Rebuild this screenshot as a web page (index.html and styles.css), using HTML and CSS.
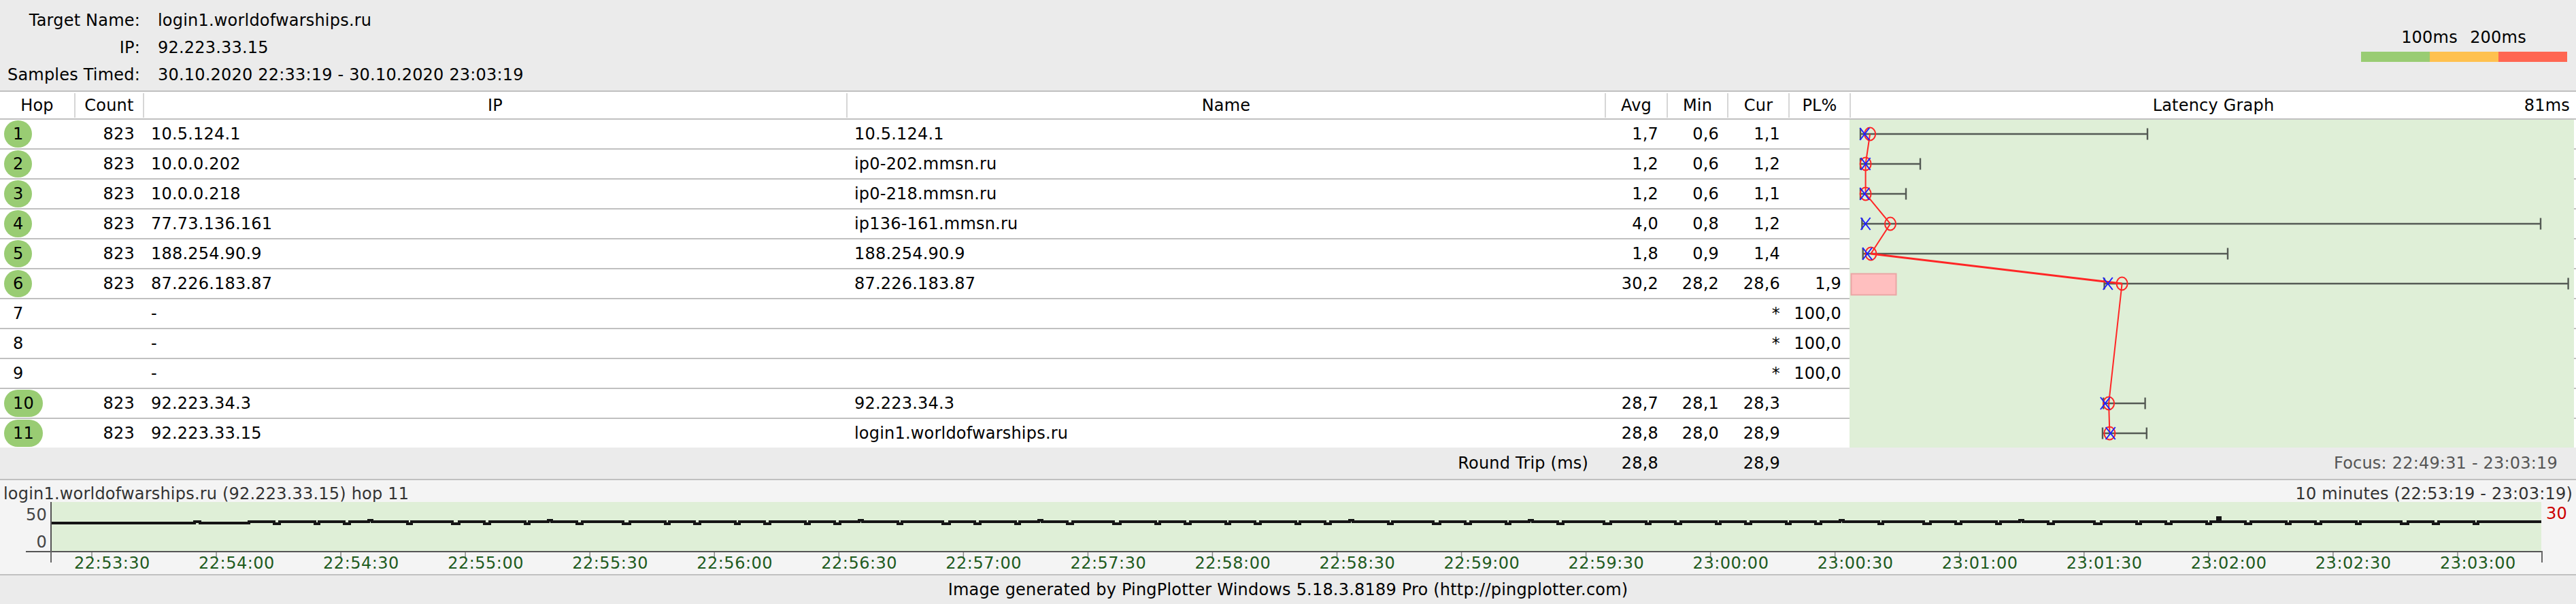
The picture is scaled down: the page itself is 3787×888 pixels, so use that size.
FILE: index.html
```html
<!DOCTYPE html>
<html>
<head>
<meta charset="utf-8">
<title>PingPlotter</title>
<link rel="stylesheet" href="styles.css">
</head>
<body>
<header class="top">
  <div class="info">
    <span class="lbl">Target Name:</span><span>login1.worldofwarships.ru</span>
    <span class="lbl">IP:</span><span>92.223.33.15</span>
    <span class="lbl">Samples Timed:</span><span>30.10.2020 22:33:19 - 30.10.2020 23:03:19</span>
  </div>
  <div class="legend">
    <div class="legend-labels"><span>100ms</span><span>200ms</span></div>
    <div class="legend-bar"><i class="g"></i><i class="o"></i><i class="r"></i></div>
  </div>
</header>

<section class="table">
  <div class="thead">
    <div class="th">Hop</div>
    <div class="th">Count</div>
    <div class="th">IP</div>
    <div class="th">Name</div>
    <div class="th">Avg</div>
    <div class="th">Min</div>
    <div class="th">Cur</div>
    <div class="th">PL%</div>
    <div class="th lat-head"><span></span><span>Latency Graph</span><span class="maxms">81ms</span></div>
  </div>
  <div class="tbody">
    <div class="rows">
      <div class="row"><div class="hop"><span class="pill">1</span></div><div class="n">823</div><div class="t">10.5.124.1</div><div class="t">10.5.124.1</div><div class="n">1,7</div><div class="n">0,6</div><div class="n">1,1</div><div class="n"></div></div>
      <div class="row"><div class="hop"><span class="pill">2</span></div><div class="n">823</div><div class="t">10.0.0.202</div><div class="t">ip0-202.mmsn.ru</div><div class="n">1,2</div><div class="n">0,6</div><div class="n">1,2</div><div class="n"></div></div>
      <div class="row"><div class="hop"><span class="pill">3</span></div><div class="n">823</div><div class="t">10.0.0.218</div><div class="t">ip0-218.mmsn.ru</div><div class="n">1,2</div><div class="n">0,6</div><div class="n">1,1</div><div class="n"></div></div>
      <div class="row"><div class="hop"><span class="pill">4</span></div><div class="n">823</div><div class="t">77.73.136.161</div><div class="t">ip136-161.mmsn.ru</div><div class="n">4,0</div><div class="n">0,8</div><div class="n">1,2</div><div class="n"></div></div>
      <div class="row"><div class="hop"><span class="pill">5</span></div><div class="n">823</div><div class="t">188.254.90.9</div><div class="t">188.254.90.9</div><div class="n">1,8</div><div class="n">0,9</div><div class="n">1,4</div><div class="n"></div></div>
      <div class="row"><div class="hop"><span class="pill">6</span></div><div class="n">823</div><div class="t">87.226.183.87</div><div class="t">87.226.183.87</div><div class="n">30,2</div><div class="n">28,2</div><div class="n">28,6</div><div class="n">1,9</div></div>
      <div class="row"><div class="hop"><span class="pill none">7</span></div><div class="n"></div><div class="t">-</div><div class="t"></div><div class="n"></div><div class="n"></div><div class="n">*</div><div class="n">100,0</div></div>
      <div class="row"><div class="hop"><span class="pill none">8</span></div><div class="n"></div><div class="t">-</div><div class="t"></div><div class="n"></div><div class="n"></div><div class="n">*</div><div class="n">100,0</div></div>
      <div class="row"><div class="hop"><span class="pill none">9</span></div><div class="n"></div><div class="t">-</div><div class="t"></div><div class="n"></div><div class="n"></div><div class="n">*</div><div class="n">100,0</div></div>
      <div class="row"><div class="hop"><span class="pill">10</span></div><div class="n">823</div><div class="t">92.223.34.3</div><div class="t">92.223.34.3</div><div class="n">28,7</div><div class="n">28,1</div><div class="n">28,3</div><div class="n"></div></div>
      <div class="row"><div class="hop"><span class="pill">11</span></div><div class="n">823</div><div class="t">92.223.33.15</div><div class="t">login1.worldofwarships.ru</div><div class="n">28,8</div><div class="n">28,0</div><div class="n">28,9</div><div class="n"></div></div>
    </div>
    <div class="graph">
      <svg width="1068" height="482" viewBox="0 0 1068 482">
        <rect x="0" y="0" width="1065" height="482" fill="#dfefd7"/>
        <g fill="#c0c0c0">
          <rect x="1065" y="42" width="3" height="2"/><rect x="1065" y="86" width="3" height="2"/>
          <rect x="1065" y="130" width="3" height="2"/><rect x="1065" y="174" width="3" height="2"/>
          <rect x="1065" y="218" width="3" height="2"/><rect x="1065" y="262" width="3" height="2"/>
          <rect x="1065" y="306" width="3" height="2"/><rect x="1065" y="350" width="3" height="2"/>
          <rect x="1065" y="394" width="3" height="2"/><rect x="1065" y="438" width="3" height="2"/>
        </g>
        <rect x="2.5" y="226.5" width="66" height="31" fill="#ffbfbf" stroke="#eba5a5" stroke-width="2"/>
        <g fill="none" stroke="#545a54" stroke-width="2.4">
          <path d="M16 21H438M16 12.5V29.5M438 12.5V29.5"/>
          <path d="M16 65H104M16 56.5V73.5M104 56.5V73.5"/>
          <path d="M16 109H83M16 100.5V117.5M83 100.5V117.5"/>
          <path d="M18.4 153H1016M18.4 144.5V161.5M1016 144.5V161.5"/>
          <path d="M19.7 197H556M19.7 188.5V205.5M556 188.5V205.5"/>
          <path d="M374.6 241H1056.6M374.6 232.5V249.5M1056.6 232.5V249.5"/>
          <path d="M373.3 417H434.6M373.3 408.5V425.5M434.6 408.5V425.5"/>
          <path d="M372 461H436.8M372 452.5V469.5M436.8 452.5V469.5"/>
        </g>
        <polyline points="30.1,21 23.6,65 23.6,109 60,153 31.4,197" fill="none" stroke="#ff2626" stroke-width="2"/>
        <polyline points="31.4,197 400.6,241" fill="none" stroke="#ff2626" stroke-width="3"/>
        <polyline points="400.6,241 381.1,417 382.4,461" fill="none" stroke="#ff2626" stroke-width="2"/>
        <g fill="none" stroke="#ff2626" stroke-width="2">
          <ellipse cx="30.1" cy="21" rx="8" ry="9.5"/>
          <ellipse cx="23.6" cy="65" rx="8" ry="9.5"/>
          <ellipse cx="23.6" cy="109" rx="8" ry="9.5"/>
          <ellipse cx="60" cy="153" rx="8" ry="9.5"/>
          <ellipse cx="31.4" cy="197" rx="8" ry="9.5"/>
          <ellipse cx="400.6" cy="241" rx="8" ry="9.5"/>
          <ellipse cx="381.1" cy="417" rx="8" ry="9.5"/>
          <ellipse cx="382.4" cy="461" rx="8" ry="9.5"/>
        </g>
        <g fill="none" stroke="#1f1fff" stroke-width="2">
          <path d="M15.3 12L29.3 30M29.3 12L15.3 30"/>
          <path d="M16.6 56L30.6 74M30.6 56L16.6 74"/>
          <path d="M15.3 100L29.3 118M29.3 100L15.3 118"/>
          <path d="M16.6 144L30.6 162M30.6 144L16.6 162"/>
          <path d="M19.2 188L33.2 206M33.2 188L19.2 206"/>
          <path d="M372.8 232L386.8 250M386.8 232L372.8 250"/>
          <path d="M368.9 408L382.9 426M382.9 408L368.9 426"/>
          <path d="M376.7 452L390.7 470M390.7 452L376.7 470"/>
        </g>
      </svg>
    </div>
  </div>
  <div class="summary">
    <div class="rt">Round Trip (ms)</div>
    <div class="n">28,8</div>
    <div class="n"></div>
    <div class="n">28,9</div>
    <div class="n"></div>
    <div class="focus">Focus: 22:49:31 - 23:03:19</div>
  </div>
</section>

<section class="history">
  <div class="hist-title">
    <span>login1.worldofwarships.ru (92.223.33.15) hop 11</span>
    <span>10 minutes (22:53:19 - 23:03:19)</span>
  </div>
  <div class="chart">
    <div class="ylab"><span class="y50">50</span><span class="y0">0</span></div>
    <div class="plot">
      <svg width="3660" height="72" viewBox="0 0 3660 72">
        <path fill="none" stroke="#151515" stroke-width="4" shape-rendering="crispEdges" d="M0 31H210V28.5H218V31H290V29
h37v2.5h8v-2.5h52v2.5h6v-2.5h37v2.5h8v-2.5h28v-2.5h5v2.5h52v2.5h6v-2.5h60v2.5h10v-2.5h37v2.5h8v-2.5h52v2.5h6v-2.5h28v-2.5h5v2.5h37v2.5h8v-2.5h60v2.5h10v-2.5h52v2.5h6v-2.5h37v2.5h8v-2.5h52v2.5h6v-2.5
h37v2.5h8v-2.5h52v2.5h6v-2.5h37v2.5h8v-2.5h28v-2.5h5v2.5h52v2.5h6v-2.5h60v2.5h10v-2.5h37v2.5h8v-2.5h52v2.5h6v-2.5h28v-2.5h5v2.5h37v2.5h8v-2.5h60v2.5h10v-2.5h52v2.5h6v-2.5h37v2.5h8v-2.5h52v2.5h6v-2.5
h37v2.5h8v-2.5h52v2.5h6v-2.5h37v2.5h8v-2.5h28v-2.5h5v2.5h52v2.5h6v-2.5h60v2.5h10v-2.5h37v2.5h8v-2.5h52v2.5h6v-2.5h28v-2.5h5v2.5h37v2.5h8v-2.5h60v2.5h10v-2.5h52v2.5h6v-2.5h37v2.5h8v-2.5h52v2.5h6v-2.5
h37v2.5h8v-2.5h52v2.5h6v-2.5h37v2.5h8v-2.5h28v-2.5h5v2.5h52v2.5h6v-2.5h60v2.5h10v-2.5h37v2.5h8v-2.5h52v2.5h6v-2.5h28v-2.5h5v2.5h37v2.5h8v-2.5h60v2.5h10v-2.5h52v2.5h6v-2.5h37v2.5h8v-2.5h52v2.5h6v-2.5
h10v-6h4v6
h37v2.5h8v-2.5h52v2.5h6v-2.5h37v2.5h8v-2.5h52v2.5h6v-2.5h60v2.5h10v-2.5h37v2.5h8v-2.5h52v2.5h6v-2.5h93"/>
      </svg>
    </div>
    <div class="ymax">30</div>
  </div>
  <svg class="axis" width="3787" height="18" viewBox="0 0 3787 18">
    <path d="M38 1H3738" stroke="#555" stroke-width="2"/>
    <path d="M75 0V17M3737 0V17" stroke="#666" stroke-width="2"/>
    <path stroke="#8a8a8a" stroke-width="1.5" d="M135 2V10M318.05 2V10M501.1 2V10M684.15 2V10M867.2 2V10M1050.25 2V10M1233.3 2V10M1416.35 2V10M1599.4 2V10M1782.45 2V10M1965.5 2V10M2148.55 2V10M2331.6 2V10M2514.65 2V10M2697.7 2V10M2880.75 2V10M3063.8 2V10M3246.85 2V10M3429.9 2V10M3612.95 2V10"/>
  </svg>
  <div class="ticks">
    <span>22:53:30</span><span>22:54:00</span><span>22:54:30</span><span>22:55:00</span><span>22:55:30</span>
    <span>22:56:00</span><span>22:56:30</span><span>22:57:00</span><span>22:57:30</span><span>22:58:00</span>
    <span>22:58:30</span><span>22:59:00</span><span>22:59:30</span><span>23:00:00</span><span>23:00:30</span>
    <span>23:01:00</span><span>23:01:30</span><span>23:02:00</span><span>23:02:30</span><span>23:03:00</span>
  </div>
</section>

<footer class="foot">Image generated by PingPlotter Windows 5.18.3.8189 Pro (http://pingplotter.com)</footer>
</body>
</html>
```

FILE: styles.css
```css
html, body {
  margin: 0;
  padding: 0;
}
body {
  width: 3787px;
  font-family: "DejaVu Sans", Verdana, sans-serif;
  font-size: 24px;
  letter-spacing: 0.2px;
  color: #000;
  background: #ebebeb;
}

/* header */
.top {
  height: 133px;
  display: flex;
  justify-content: space-between;
  background: #ebebeb;
}
.info {
  display: grid;
  grid-template-columns: 206px auto;
  column-gap: 26px;
  align-content: start;
  padding-top: 10px;
  line-height: 40px;
}
.info .lbl {
  text-align: right;
  white-space: nowrap;
}
.legend {
  width: 303px;
  margin-right: 13px;
  padding-top: 40px;
}
.legend-labels {
  display: flex;
  padding-left: 50px;
  height: 30px;
  line-height: 30px;
}
.legend-labels span {
  width: 101px;
  text-align: center;
}
.legend-bar {
  display: flex;
  height: 15px;
  margin-top: 6px;
}
.legend-bar i {
  flex: 1;
}
.g { background: #99cc73; }
.o { background: #ffc14f; }
.r { background: #ff6652; }

/* table */
.table {
  background: #fff;
  border-top: 2px solid #c0c0c0;
}
.thead {
  display: grid;
  grid-template-columns: 109px 101px 1034px 1115px 91px 89px 90px 90px 1fr;
  height: 39px;
  align-items: center;
  border-bottom: 2px solid #c0c0c0;
}
.th {
  height: 36px;
  line-height: 36px;
  text-align: center;
  border-left: 2px solid #d6d6d6;
}
.th:first-child {
  border-left: none;
}
.lat-head {
  display: grid;
  grid-template-columns: 1fr auto 1fr;
}
.maxms {
  justify-self: end;
  padding-right: 9px;
}
.tbody {
  display: flex;
}
.rows {
  width: 2719px;
}
.row {
  display: grid;
  grid-template-columns: 109px 101px 1034px 1115px 91px 89px 90px 90px;
  height: 42px;
  line-height: 42px;
  align-items: center;
  border-bottom: 2px solid #c0c0c0;
}
.row:last-child {
  border-bottom: none;
}
.n {
  text-align: right;
  padding-right: 12px;
}
.t {
  padding-left: 12px;
  white-space: nowrap;
}
.hop {
  padding-left: 6px;
  display: flex;
  align-items: center;
}
.pill {
  display: inline-block;
  box-sizing: border-box;
  min-width: 40px;
  height: 40px;
  line-height: 40px;
  padding: 0 13px;
  border-radius: 20px;
  background: #99cc73;
  text-align: center;
}
.pill.none {
  background: transparent;
}
.graph {
  flex: 1;
  height: 482px;
}
.graph svg {
  display: block;
}
.summary {
  display: grid;
  grid-template-columns: 2359px 91px 89px 90px 90px 1fr;
  height: 46px;
  line-height: 46px;
  background: #ebebeb;
}
.rt {
  text-align: right;
  padding-right: 24px;
}
.focus {
  text-align: right;
  padding-right: 27px;
  color: #555;
}

/* history chart */
.history {
  height: 138px;
  border-top: 2px solid #c0c0c0;
  background: #f4f4f4;
}
.hist-title {
  display: flex;
  justify-content: space-between;
  height: 32px;
  line-height: 40px;
  padding: 0 5px;
  color: #333;
}
.chart {
  display: flex;
  height: 72px;
}
.ylab {
  width: 74px;
  box-sizing: border-box;
  padding-right: 5px;
  display: flex;
  flex-direction: column;
  align-items: flex-end;
  color: #444;
}
.y50 {
  line-height: 38px;
  height: 38px;
}
.y0 {
  line-height: 42px;
  height: 34px;
}
.plot {
  width: 3660px;
  border-left: 2px solid #555;
  background: #dfefd7;
}
.plot svg {
  display: block;
}
.ymax {
  padding-left: 7px;
  line-height: 34px;
  color: #cc0000;
}
.axis {
  display: block;
  margin-bottom: -13px;
}
.ticks {
  display: flex;
  padding-left: 109px;
  line-height: 26px;
  color: #1e5b1e;
  letter-spacing: 0.5px;
}
.ticks span {
  flex: 0 0 183.05px;
}

/* footer */
.foot {
  height: 42px;
  line-height: 42px;
  border-top: 2px solid #c0c0c0;
  text-align: center;
  background: #ebebeb;
}
```
